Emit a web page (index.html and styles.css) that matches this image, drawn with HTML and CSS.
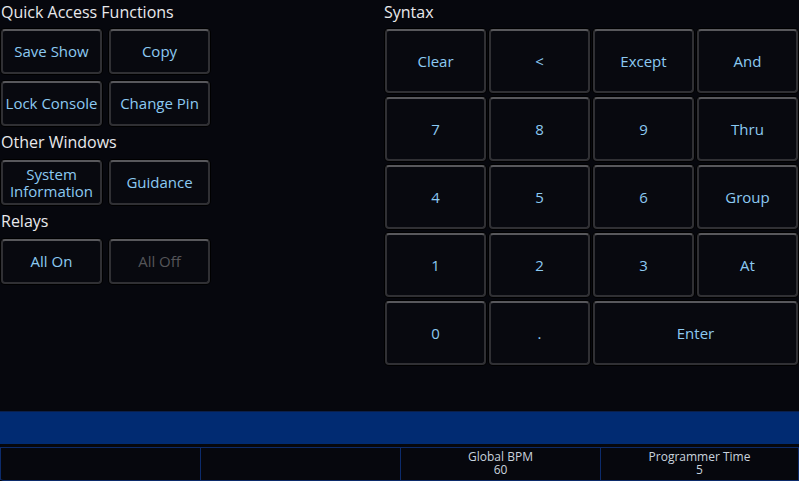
FILE: index.html
```html
<!DOCTYPE html>
<html>
<head>
  <title>Quick Access</title>
  <link rel="stylesheet" href="styles.css">
</head>
<body>
  <div class="main">
    <div class="left">
      <div class="section-title first">Quick Access Functions</div>
      <div class="btn-grid">
        <button class="btn">Save Show</button>
        <button class="btn">Copy</button>
        <button class="btn">Lock Console</button>
        <button class="btn">Change Pin</button>
      </div>
      <div class="section-title">Other Windows</div>
      <div class="btn-grid">
        <button class="btn two-line">System<br>Information</button>
        <button class="btn">Guidance</button>
      </div>
      <div class="section-title">Relays</div>
      <div class="btn-grid">
        <button class="btn">All On</button>
        <button class="btn disabled">All Off</button>
      </div>
    </div>
    <div class="right">
      <div class="section-title first">Syntax</div>
      <div class="keypad">
        <button class="btn key">Clear</button>
        <button class="btn key">&lt;</button>
        <button class="btn key">Except</button>
        <button class="btn key">And</button>
        <button class="btn key">7</button>
        <button class="btn key">8</button>
        <button class="btn key">9</button>
        <button class="btn key">Thru</button>
        <button class="btn key">4</button>
        <button class="btn key">5</button>
        <button class="btn key">6</button>
        <button class="btn key">Group</button>
        <button class="btn key">1</button>
        <button class="btn key">2</button>
        <button class="btn key">3</button>
        <button class="btn key">At</button>
        <button class="btn key">0</button>
        <button class="btn key">.</button>
        <button class="btn key wide">Enter</button>
      </div>
    </div>
  </div>
  <div class="command-bar"></div>
  <div class="footer">
    <div class="cell"></div>
    <div class="cell"></div>
    <div class="cell">Global BPM<br>60</div>
    <div class="cell">Programmer Time<br>5</div>
  </div>
</body>
</html>
```
FILE: styles.css
```css
html, body {
  margin: 0;
  padding: 0;
}

body {
  width: 799px;
  height: 481px;
  overflow: hidden;
  background-color: #06070d;
  font-family: "Open Sans", "Noto Sans", sans-serif;
  display: flex;
  flex-direction: column;
}

.main {
  height: 411px;
  display: flex;
}

.left {
  width: 384px;
  padding-left: 1px;
  box-sizing: border-box;
}

.right {
  flex: 1;
}

.section-title {
  color: #e9e9ec;
  font-size: 16px;
  line-height: 22px;
  padding: 5px 0 7px 0;
}

.section-title.first {
  padding: 1px 0 6px 0;
}

.btn-grid {
  display: grid;
  grid-template-columns: 101px 101px;
  grid-auto-rows: 45px;
  column-gap: 7px;
  row-gap: 7px;
}

.btn {
  margin: 0;
  padding: 0;
  background-color: #08090f;
  color: #8cc9f2;
  font-family: inherit;
  font-size: 15px;
  line-height: 17px;
  border: 2px solid #303034;
  border-top-color: #58585c;
  border-radius: 4px;
  box-shadow: 0 0 0 1px #000;
  cursor: pointer;
}

.btn.disabled {
  color: #555559;
}

.keypad {
  display: grid;
  grid-template-columns: repeat(4, 101px);
  grid-auto-rows: 64px;
  column-gap: 3px;
  row-gap: 4px;
  margin-left: 1px;
}

.key.wide {
  grid-column: span 2;
}

.command-bar {
  height: 33px;
  background-color: #012b72;
  border-top: 1px solid #0b1f4a;
  box-sizing: border-box;
}

.footer {
  margin-top: 3px;
  height: 34px;
  display: grid;
  grid-template-columns: 200px 200px 200px 199px;
  border-top: 1px solid #0c2b6b;
  border-bottom: 1px solid #0c2b6b;
  box-sizing: border-box;
  border-bottom-left-radius: 4px;
}

.cell {
  border-left: 1px solid #0c2b6b;
  color: #c9d3de;
  font-size: 12px;
  line-height: 13px;
  text-align: center;
  padding-top: 2px;
}

.cell:last-child {
  border-right: 1px solid #0c2b6b;
}
```
